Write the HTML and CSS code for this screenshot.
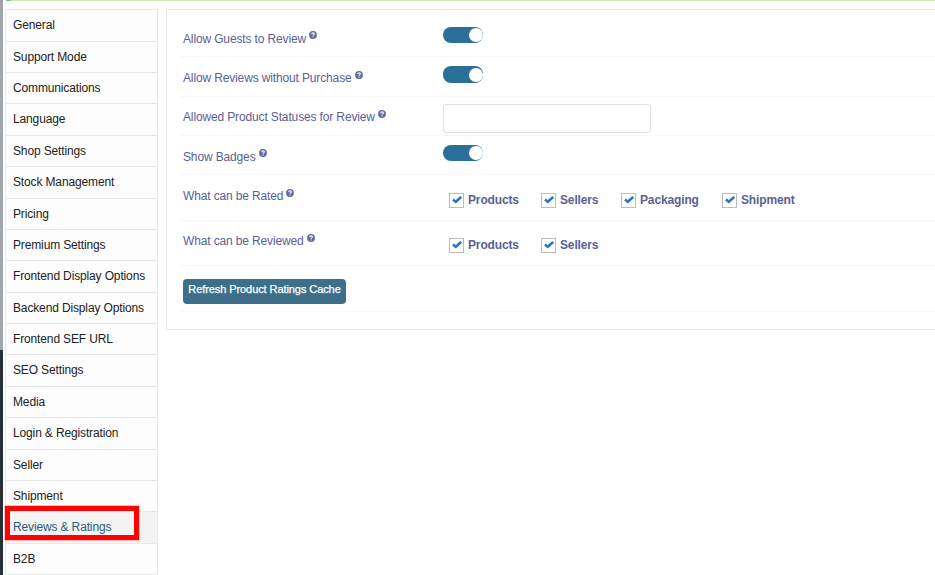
FILE: index.html
```html
<!DOCTYPE html>
<html lang="en">
<head>
<meta charset="utf-8">
<title>Reviews &amp; Ratings</title>
<link rel="stylesheet" href="styles.css">
</head>
<body>
<svg class="defs" width="0" height="0">
  <symbol id="help" viewBox="0 0 8 8"><circle cx="4" cy="4" r="3.9" fill="#65699c"/><path d="M2.7 3.1Q2.8 1.8 4.1 1.8Q5.4 1.9 5.4 3Q5.3 3.7 4.5 4Q4.1 4.2 4.1 4.8M4.1 5.4V6.5" fill="none" stroke="#fff" stroke-width="1.1"/></symbol>
  <symbol id="check" viewBox="0 0 10 8"><path d="M0.9 3.5L3.8 5.8L9.2 0.9" fill="none" stroke="#2a76cb" stroke-width="2.6"/></symbol>
</svg>
<div class="alert"></div>
<div class="page">
  <div class="rail"></div>
  <nav class="menu">
    <a><span>General</span></a>
    <a><span>Support Mode</span></a>
    <a><span>Communications</span></a>
    <a><span>Language</span></a>
    <a><span>Shop Settings</span></a>
    <a><span>Stock Management</span></a>
    <a><span>Pricing</span></a>
    <a><span>Premium Settings</span></a>
    <a><span>Frontend Display Options</span></a>
    <a><span>Backend Display Options</span></a>
    <a><span>Frontend SEF URL</span></a>
    <a><span>SEO Settings</span></a>
    <a><span>Media</span></a>
    <a><span>Login &amp; Registration</span></a>
    <a><span>Seller</span></a>
    <a><span>Shipment</span></a>
    <a class="active"><span>Reviews &amp; Ratings</span><i class="highlight"></i></a>
    <a><span>B2B</span></a>
  </nav>
  <main class="panel">
    <div class="row r1"><label>Allow Guests to Review<svg class="help"><use href="#help"/></svg></label><div class="toggle"></div></div>
    <div class="row r2"><label>Allow Reviews without Purchase<svg class="help"><use href="#help"/></svg></label><div class="toggle"></div></div>
    <div class="row r3"><label>Allowed Product Statuses for Review<svg class="help"><use href="#help"/></svg></label><input type="text"></div>
    <div class="row r4"><label>Show Badges<svg class="help"><use href="#help"/></svg></label><div class="toggle"></div></div>
    <div class="row r5"><label>What can be Rated<svg class="help"><use href="#help"/></svg></label>
      <div class="checks">
        <span class="opt products"><i><svg><use href="#check"/></svg></i>Products</span>
        <span class="opt sellers"><i><svg><use href="#check"/></svg></i>Sellers</span>
        <span class="opt packaging"><i><svg><use href="#check"/></svg></i>Packaging</span>
        <span class="opt"><i><svg><use href="#check"/></svg></i>Shipment</span>
      </div></div>
    <div class="row r6"><label>What can be Reviewed<svg class="help"><use href="#help"/></svg></label>
      <div class="checks">
        <span class="opt products"><i><svg><use href="#check"/></svg></i>Products</span>
        <span class="opt sellers"><i><svg><use href="#check"/></svg></i>Sellers</span>
      </div></div>
    <div class="row r7"><button>Refresh Product Ratings Cache</button></div>
  </main>
</div>
</body>
</html>
```
FILE: styles.css
```css
* { box-sizing: border-box; }
body {
  margin: 0;
  height: 575px;
  overflow: hidden;
  background: #fff;
  font-family: "Liberation Sans", Arial, sans-serif;
  font-size: 12px;
  letter-spacing: -0.14px;
}
.defs { display: none; }
.alert {
  height: 1px;
  margin-left: 6px;
  background: linear-gradient(to right, #7fc08a 5px, #cdeebb 5px);
}
.page { display: flex; height: 574px; }
.rail {
  flex: none;
  width: 3px;
  margin-top: -1px;
  height: 575px;
  background: linear-gradient(#a0a5a9 350px, #263039 350px);
}
.menu {
  flex: none;
  width: 153px;
  height: 567px;
  margin: 8px 0 0 2px;
  padding-top: 0.2px;
  border: 1px solid #e8e8e8;
  border-bottom: 0;
  background: #fdfdfd;
}
.menu a {
  display: block;
  position: relative;
  height: 31.4px;
  padding-left: 7px;
  line-height: 30.4px;
  border-bottom: 1px solid #e8e8e8;
  color: #222;
  white-space: nowrap;
}
.menu .active { background: #f3f3f3; color: #285e7b; }
.highlight {
  position: absolute;
  left: -1px;
  top: -6px;
  width: 134px;
  height: 34px;
  border: 5px solid #f80505;
  box-shadow: 0 0 0 0.5px #fa8080;
}
.panel {
  width: 780px;
  height: 321px;
  flex: none;
  margin: 8px 0 0 8px;
  padding: 7px 0 0 13px;
  border: 1px solid #e8e8e8;
}
.row {
  display: grid;
  grid-template-columns: 260px auto;
  justify-content: start;
  align-items: start;
  padding-left: 3px;
  border-bottom: 1px solid #f7f7f7;
  color: #5b6096;
}
.r1, .r2 { height: 40px; }
.r3, .r4 { height: 39px; }
.r5, .r7 { height: 46px; }
.r6 { height: 45px; }
.row label { padding-top: 14px; line-height: 16px; white-space: nowrap; }
.row .help { width: 8px; height: 8px; margin-left: 3px; vertical-align: 4px; }
.r2 label, .r4 label, .r5 label { padding-top: 13px; }
.r3 label, .r6 label { padding-top: 12px; }
.r2 .help, .r3 .help, .r5 .help, .r6 .help { vertical-align: 3px; }
.toggle {
  width: 40px;
  height: 16px;
  margin-top: 10px;
  padding: 1px;
  border-radius: 8px;
  background: #2b7098;
}
.toggle::after {
  content: "";
  display: block;
  width: 14px;
  height: 14px;
  margin-left: 24.5px;
  border-radius: 50%;
  background: #fff;
}
.r2 .toggle { height: 17px; margin-top: 9px; padding-top: 1.5px; }
.r4 .toggle { margin-top: 9px; }
input {
  width: 208px;
  height: 29px;
  margin-top: 7px;
  border: 1px solid #e0e0ec;
  border-radius: 3px;
  background: #fff;
}
.checks { display: flex; padding: 18px 0 0 6px; font-weight: bold; line-height: 15px; }
.r6 .checks { padding-top: 17px; }
.opt { display: flex; }
.opt i {
  width: 15px;
  height: 15px;
  margin-right: 4px;
  padding: 2px 0 0 2px;
  border: 1px solid #bdbdbd;
}
.opt svg { display: block; width: 10px; height: 8px; }
.products { width: 92px; }
.sellers { width: 80px; }
.packaging { width: 101px; }
button {
  width: 163px;
  height: 25px;
  margin-top: 13px;
  padding: 0 0 5px;
  border: 0;
  border-radius: 4px;
  background: #3d6f8a;
  color: #fff;
  font: 11px "Liberation Sans", Arial, sans-serif;
  letter-spacing: -0.08px;
  -webkit-text-stroke: 0.25px #fff;
  white-space: nowrap;
}
```
